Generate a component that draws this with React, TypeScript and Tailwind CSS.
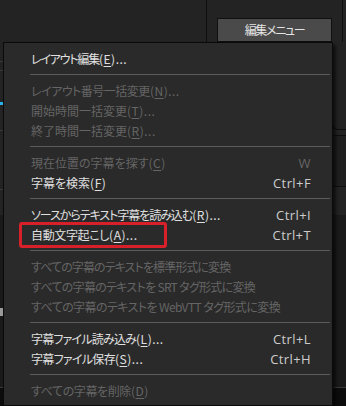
import React from "react";

type Item =
  | { kind: "sep" }
  | {
      kind: "item";
      jp: string;
      key?: string;
      tail?: string;
      shortcut?: string;
      disabled?: boolean;
      boxed?: boolean;
      track: string;
    };

const items: Item[] = [
  { kind: "item", jp: "レイアウト編集", key: "E", tail: "...", track: "tracking-[-1.2px]" },
  { kind: "sep" },
  { kind: "item", jp: "レイアウト番号一括変更", key: "N", tail: "...", disabled: true, track: "tracking-[-0.5px]" },
  { kind: "item", jp: "開始時間一括変更", key: "T", tail: "...", disabled: true, track: "tracking-[0px]" },
  { kind: "item", jp: "終了時間一括変更", key: "R", tail: "...", disabled: true, track: "tracking-[0px]" },
  { kind: "sep" },
  { kind: "item", jp: "現在位置の字幕を探す", key: "C", tail: "", shortcut: "W", disabled: true, track: "tracking-[0px]" },
  { kind: "item", jp: "字幕を検索", key: "F", tail: "", shortcut: "Ctrl+F", track: "tracking-[0px]" },
  { kind: "sep" },
  { kind: "item", jp: "ソースからテキスト字幕を読み込む", key: "R", tail: "...", shortcut: "Ctrl+I", track: "tracking-[-1.05px]" },
  { kind: "item", jp: "自動文字起こし", key: "A", tail: "...", shortcut: "Ctrl+T", boxed: true, track: "tracking-[-0.35px]" },
  { kind: "sep" },
  { kind: "item", jp: "すべての字幕のテキストを標準形式に変換", disabled: true, track: "tracking-[-0.9px]" },
  { kind: "item", jp: "すべての字幕のテキストを SRT タグ形式に変換", disabled: true, track: "tracking-[-0.7px]" },
  { kind: "item", jp: "すべての字幕のテキストを WebVTT タグ形式に変換", disabled: true, track: "tracking-[-0.58px]" },
  { kind: "sep" },
  { kind: "item", jp: "字幕ファイル読み込み", key: "L", tail: "...", shortcut: "Ctrl+L", track: "tracking-[-0.8px]" },
  { kind: "item", jp: "字幕ファイル保存", key: "S", tail: "...", shortcut: "Ctrl+H", track: "tracking-[-0.7px]" },
  { kind: "sep" },
  { kind: "item", jp: "すべての字幕を削除", key: "D", tail: "", disabled: true, track: "tracking-[-0.4px]" },
];

function Menu() {
  return (
    <div className="absolute left-[3px] top-[42px] w-[330px] border border-[#0a0a0a] bg-[#2a2a2a] pt-[6px] pb-[4px] shadow-[3px_3px_3px_rgba(0,0,0,0.6)]">
      {items.map((it, i) =>
        it.kind === "sep" ? (
          <div key={i} className="h-[12px] pt-[5px] pl-[26px] pr-[2px]">
            <div className="h-px bg-[#5c5c5c]" />
          </div>
        ) : (
          <div
            key={i}
            className={`relative flex h-[20px] items-center justify-between pl-[27px] pr-[21px] text-[12px] leading-none ${
              it.disabled ? "text-[#656565]" : "text-[#e0e0e0]"
            }`}
          >
            <span className="whitespace-nowrap">
              <span className={it.track}>{it.jp}</span>
              {it.key && (
                <span className="tracking-[0.5px]">
                  (<span className="underline underline-offset-[2px]">{it.key}</span>){it.tail}
                </span>
              )}
            </span>
            {it.shortcut && (
              <span
                className={`font-['Open_Sans',sans-serif] text-[13px] tracking-[0.4px] ${
                  it.disabled ? "text-[#656565]" : "text-[#cccccc]"
                }`}
              >
                {it.shortcut}
              </span>
            )}
            {it.boxed && (
              <div className="absolute left-[15px] top-[-3px] h-[26px] w-[148px] rounded-[3px] border-[3px] border-[#d8202a]" />
            )}
          </div>
        )
      )}
    </div>
  );
}

export default function App() {
  return (
    <div className="relative flex h-[406px] w-[346px] flex-col overflow-hidden bg-[#232323] font-['Noto_Sans_CJK_JP','Noto_Sans',sans-serif] [font-feature-settings:'palt']">
      {/* top strip with the menu button */}
      <div className="flex h-[42px] shrink-0">
        <div className="w-[207px] border-r border-[#0e0e0e]" />
        <div className="flex flex-1 items-start pt-[18px] pl-[10px]">
          <div className="flex h-[24px] w-[115px] items-center justify-center border border-[#101010] bg-[#4a4a4a] text-[12px] leading-none tracking-[-1.3px] text-[#e4e4e4]">
            編集メニュー
          </div>
        </div>
        <div className="w-[4px] border-l border-[#0e0e0e]" />
      </div>

      {/* middle area */}
      <div className="flex h-[173px] shrink-0">
        <div className="flex w-[4px] flex-col">
          <div className="h-[19px]" />
          <div className="h-px bg-[#3a3a3a]" />
          <div className="h-[8px]" />
          <div className="h-px bg-[#3a3a3a]" />
          <div className="h-[31px]" />
          <div className="h-[3px] w-[3px] bg-[#2ab0e8]" />
          <div className="h-[25px]" />
          <div className="h-px bg-[#3a3a3a]" />
          <div className="h-[58px]" />
          <div className="h-px bg-[#3a3a3a]" />
        </div>
        <div className="flex-1" />
        <div className="flex w-[14px] flex-col">
          <div className="h-[88px] rounded-bl-[6px] border-b border-l border-[#0e0e0e]" />
          <div className="mt-[5px] h-[52px] border-y border-[#0e0e0e] bg-[#1f1f1f]" />
        </div>
      </div>

      {/* lower darker panel */}
      <div className="flex h-[172px] shrink-0 flex-col bg-[#1a1a1a]">
        <div className="h-[93px]" />
        <div className="h-[8px] w-[3px] bg-[#9a9a9a]" />
      </div>

      {/* bottom bar */}
      <div className="flex-1 border-t border-[#3a3a3a] bg-[#0c0c0c]" />

      <Menu />
    </div>
  );
}
